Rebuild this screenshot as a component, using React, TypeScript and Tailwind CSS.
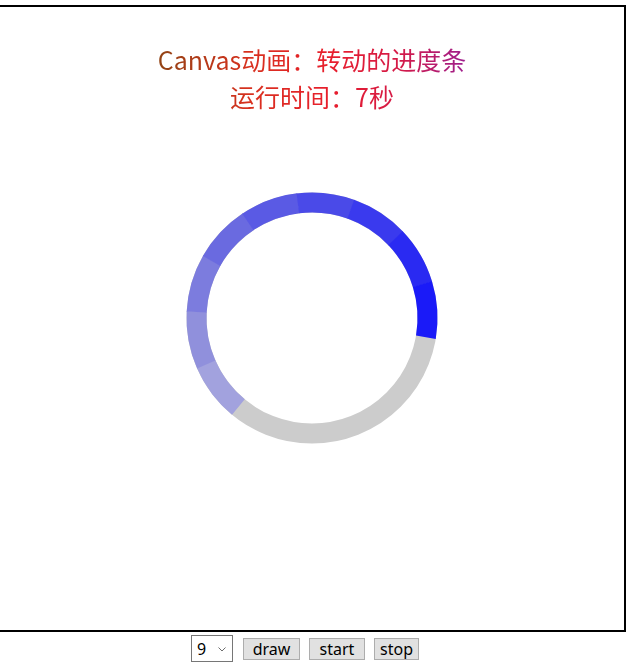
import React from 'react'

const CX = 130
const CY = 130
const R = 115.5

// point on the ring, angle in degrees clockwise from east (canvas style)
const pt = (deg: number) => {
  const a = (deg * Math.PI) / 180
  return [CX + R * Math.cos(a), CY + R * Math.sin(a)]
}

const arc = (from: number, to: number) => {
  const [x1, y1] = pt(from)
  const [x2, y2] = pt(to)
  const large = to - from > 180 ? 1 : 0
  return `M ${x1} ${y1} A ${R} ${R} 0 ${large} 1 ${x2} ${y2}`
}

const segColors = [
  '#a2a2de',
  '#9090dc',
  '#7c7cde',
  '#6a6ae0',
  '#5a5ae4',
  '#4a4ae8',
  '#3a3aee',
  '#2a2af2',
  '#1a1af8',
]

const START = 129.6
const STEP = 240 / 9

const Ring: React.FC = () => (
  <svg width={260} height={260} viewBox="0 0 260 260">
    <circle cx={CX} cy={CY} r={R} fill="none" stroke="#cccccc" strokeWidth={20} />
    {segColors.map((c, i) => (
      <path
        key={i}
        d={arc(START + i * STEP, START + (i + 1) * STEP + (i < 8 ? 0.3 : 0))}
        fill="none"
        stroke={c}
        strokeWidth={20}
      />
    ))}
  </svg>
)

export default function App() {
  return (
    <div className="w-[629px] h-[669px] bg-white overflow-hidden font-['Noto_Sans_CJK_SC',sans-serif]">
      {/* canvas area */}
      <div className="mt-[5px] w-[626px] h-[627px] border-2 border-l-0 border-black flex flex-col items-center">
        <div className="pt-[33px] w-full text-center text-[25px] leading-[38px] bg-[linear-gradient(90deg,#8b4513_150px,#d8301e_250px,#e81e2c_330px,#d41a48_400px,#9a1e92_470px)] bg-clip-text text-transparent">
          <div>Canvas动画：转动的进度条</div>
          <div className="-mt-[1px]">运行时间：7秒</div>
        </div>
        <div className="mt-[73px]">
          <Ring />
        </div>
      </div>

      {/* controls */}
      <div className="flex items-center justify-center pr-[19px] pt-[3px] font-['Noto_Sans',sans-serif] text-[16px] text-black">
        <div className="w-[42px] h-[27px] border border-[#767676] bg-white flex items-center justify-between pl-[5px] pr-[6px]">
          <span className="leading-none">9</span>
          <svg width="8" height="5" viewBox="0 0 8 5" className="mt-[1px]">
            <path d="M0.5 0.5 L4 4 L7.5 0.5" fill="none" stroke="#6d6d6d" strokeWidth="1" />
          </svg>
        </div>
        <button className="ml-[10px] w-[57px] h-[22px] border border-[#adadad] bg-[#e1e1e1] leading-none">draw</button>
        <button className="ml-[9px] w-[56px] h-[22px] border border-[#adadad] bg-[#e1e1e1] leading-none">start</button>
        <button className="ml-[9px] w-[45px] h-[22px] border border-[#adadad] bg-[#e1e1e1] leading-none">stop</button>
      </div>
    </div>
  )
}
